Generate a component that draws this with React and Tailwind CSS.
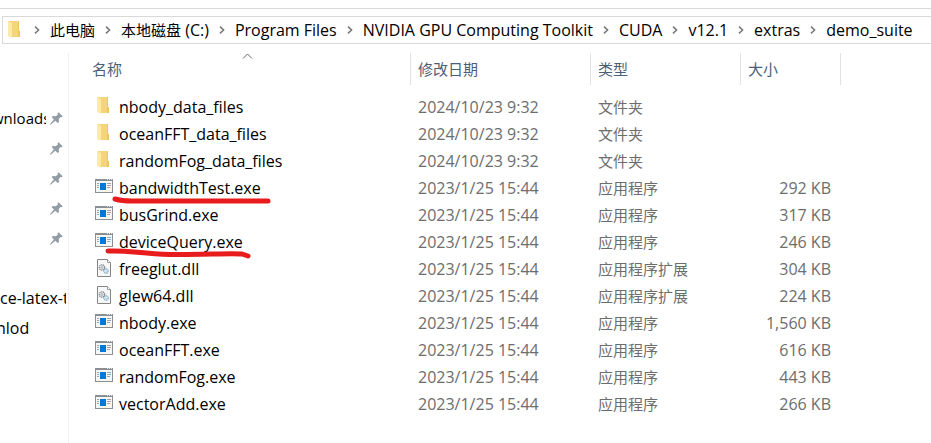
import React from "react";

const path = [
  "此电脑",
  "本地磁盘 (C:)",
  "Program Files",
  "NVIDIA GPU Computing Toolkit",
  "CUDA",
  "v12.1",
  "extras",
  "demo_suite",
];

const files = [
  { name: "nbody_data_files", kind: "folder", date: "2024/10/23 9:32", type: "文件夹", size: "" },
  { name: "oceanFFT_data_files", kind: "folder", date: "2024/10/23 9:32", type: "文件夹", size: "" },
  { name: "randomFog_data_files", kind: "folder", date: "2024/10/23 9:32", type: "文件夹", size: "" },
  { name: "bandwidthTest.exe", kind: "exe", date: "2023/1/25 15:44", type: "应用程序", size: "292 KB" },
  { name: "busGrind.exe", kind: "exe", date: "2023/1/25 15:44", type: "应用程序", size: "317 KB" },
  { name: "deviceQuery.exe", kind: "exe", date: "2023/1/25 15:44", type: "应用程序", size: "246 KB" },
  { name: "freeglut.dll", kind: "dll", date: "2023/1/25 15:44", type: "应用程序扩展", size: "304 KB" },
  { name: "glew64.dll", kind: "dll", date: "2023/1/25 15:44", type: "应用程序扩展", size: "224 KB" },
  { name: "nbody.exe", kind: "exe", date: "2023/1/25 15:44", type: "应用程序", size: "1,560 KB" },
  { name: "oceanFFT.exe", kind: "exe", date: "2023/1/25 15:44", type: "应用程序", size: "616 KB" },
  { name: "randomFog.exe", kind: "exe", date: "2023/1/25 15:44", type: "应用程序", size: "443 KB" },
  { name: "vectorAdd.exe", kind: "exe", date: "2023/1/25 15:44", type: "应用程序", size: "266 KB" },
];

const pinned = ["wnloads", "", "", "", ""];

function FolderIcon() {
  return (
    <svg width="18" height="18" viewBox="0 0 18 18" aria-hidden="true">
      <path d="M3 0h10v10h1v6H5L3 14z" fill="#f5d57c" />
      <path d="M12 0h1v10h1v6h-2z" fill="#efc65c" />
      <path d="M2 0l4 2V17L2 15z" fill="#ffe9a6" />
    </svg>
  );
}

function ExeIcon() {
  return (
    <svg width="18" height="18" viewBox="0 0 18 18" aria-hidden="true">
      <rect x="0.5" y="1.5" width="17" height="13" fill="#f6f6f6" stroke="#8a8f94" />
      <path d="M0 1h18v2H0z" fill="#8a8f94" />
      <path d="M12 1h1v1h-1zM14 1h1v1h-1zM16 1h1v1h-1z" fill="#e3e5e6" />
      <rect x="5" y="5" width="6" height="7" fill="#0078d7" />
      <path d="M2 5.5h2M2 7.5h2M2 9.5h2M12 5.5h4M12 7.5h4M12 9.5h3" stroke="#a0a4a8" />
    </svg>
  );
}

function DllIcon() {
  return (
    <svg width="18" height="18" viewBox="0 0 18 18" aria-hidden="true">
      <path d="M2.5 .5h10l3 3v14h-13z" fill="#f7f7f7" stroke="#858585" />
      <path d="M12.5 .5v3h3" fill="#fff" stroke="#9a9a9a" />
      <circle cx="7" cy="8.5" r="2.7" fill="none" stroke="#858b90" strokeWidth="1.3" strokeDasharray="1.4 .5" />
      <circle cx="7" cy="8.5" r="1" fill="none" stroke="#858b90" strokeWidth=".7" />
      <circle cx="11" cy="12" r="2.2" fill="#eaf5fc" stroke="#7fa9c4" strokeWidth="1.2" strokeDasharray="1.4 .4" />
      <circle cx="11" cy="12" r=".6" fill="#7fa9c4" />
    </svg>
  );
}

const icons = { folder: FolderIcon, exe: ExeIcon, dll: DllIcon };

function PinIcon() {
  return (
    <svg width="13" height="13" viewBox="0 0 13 13" className="shrink-0" aria-hidden="true">
      <path d="M8.500 .3L12.700 4.200 11.600 5.200 10.600 5 8.700 7l.3 3-1.200 1-2.500-2.300L1 12.400l-1 .3.300-1L3.900 7.400 1.700 5.100l1-1 3.100.2L7.900 2.400l-.4-1.100z" fill="#929ca5" />
    </svg>
  );
}

function Chevron() {
  return (
    <svg width="6" height="8" viewBox="0 0 6 8" className="shrink-0" aria-hidden="true">
      <path d="M1 .6l3.600 3.400L1 7.400" fill="none" stroke="#777" strokeWidth="1.500" />
    </svg>
  );
}

function AddressBar() {
  return (
    <nav
      aria-label="地址"
      className="ml-[2px] flex h-7 items-center overflow-hidden border border-r-0 border-[#d9d9d9] pl-[3px]"
    >
      <FolderIcon />
      <ol className="flex items-center whitespace-nowrap text-black">
        {path.map((part, i) => (
          <li key={part} className="flex items-center">
            <span className="flex w-[26px] justify-center">
              <Chevron />
            </span>
            <button type="button" className={i === 0 ? "text-[15px]" : "text-base"}>
              {i === 1 ? (
                <>
                  <span className="text-[15px]">本地磁盘</span> (C:)
                </>
              ) : (
                part
              )}
            </button>
          </li>
        ))}
      </ol>
    </nav>
  );
}

function Sidebar() {
  return (
    <aside className="w-[69px] shrink-0 overflow-hidden whitespace-nowrap border-r border-[#f0f0f0] pt-[50px] text-black">
      <ul>
        {pinned.map((label, i) => (
          <li key={i} className="flex h-[30px] items-center gap-1">
            <div className="w-[46px] shrink-0 overflow-hidden">
              <div className="-ml-2">{label}</div>
            </div>
            <PinIcon />
          </li>
        ))}
        <li className="h-[30px]" />
        <li className="h-[30px] w-[66px] overflow-hidden text-base leading-[30px]">ce-latex-t</li>
        <li className="h-[30px] text-base leading-[30px]">
          <div className="-ml-1">nlod</div>
        </li>
      </ul>
    </aside>
  );
}

function FileTable() {
  return (
    <table className="w-[772px] table-fixed border-collapse whitespace-nowrap text-left text-[#6d6d6d]">
      <colgroup>
        <col className="w-[341px]" />
        <col className="w-[180px]" />
        <col className="w-[150px]" />
        <col className="w-[101px]" />
      </colgroup>
      <thead>
        <tr className="h-8 text-[#4c607a]">
          <th className="relative p-0 pl-[23px] font-normal">
            名称
            <svg width="11" height="6" viewBox="0 0 11 6" className="absolute left-[173px] top-0" aria-hidden="true">
              <path d="M1 5.500l4.500-4.500L10 5.500" fill="none" stroke="#666" />
            </svg>
          </th>
          <th className="p-0 font-normal">
            <div className="h-8 border-l border-[#e2e2e2] pl-[7px] leading-8">修改日期</div>
          </th>
          <th className="p-0 font-normal">
            <div className="h-8 border-l border-[#e2e2e2] pl-[7px] leading-8">类型</div>
          </th>
          <th className="p-0 font-normal">
            <div className="h-8 border-x border-[#e2e2e2] pl-[7px] leading-8">大小</div>
          </th>
        </tr>
      </thead>
      <tbody>
        <tr className="h-2" aria-hidden="true">
          <td colSpan={4} className="p-0" />
        </tr>
        {files.map((f) => {
          const Icon = icons[f.kind];
          return (
            <tr key={f.name} className="h-[27px]">
              <td className="p-0 pl-[26px]">
                <div className="flex h-[27px] items-start gap-[6px] text-base leading-[29px] text-black">
                  <span className="pt-1">
                    <Icon />
                  </span>
                  {f.name}
                </div>
              </td>
              <td className="p-0 pl-2 text-base">{f.date}</td>
              <td className="p-0 pl-2">{f.type}</td>
              <td className="p-0 pr-[10px] text-right text-base">{f.size}</td>
            </tr>
          );
        })}
      </tbody>
    </table>
  );
}

export default function App() {
  return (
    <div className="flex min-h-screen flex-col overflow-hidden bg-white pt-2 font-['Open_Sans','Noto_Sans_CJK_SC',sans-serif] text-[15px] leading-5">
      <header className="border-t border-[#d9d9d9] pt-[7px]">
        <AddressBar />
      </header>
      <div className="flex grow pt-[9px]">
        <Sidebar />
        <main className="relative grow">
          <FileTable />
          <svg
            width="200"
            height="70"
            viewBox="0 0 200 70"
            className="pointer-events-none absolute left-[31px] top-[137px]"
            fill="none"
            stroke="#e81c1c"
            strokeWidth="5"
            strokeLinecap="round"
            strokeLinejoin="round"
            aria-hidden="true"
          >
            <path d="M15 9Q22 11 32 11H168" />
            <path d="M8 61C30 60 40 64 70 64.500C100 65 130 63 142 64L148 66" />
          </svg>
        </main>
      </div>
    </div>
  );
}
